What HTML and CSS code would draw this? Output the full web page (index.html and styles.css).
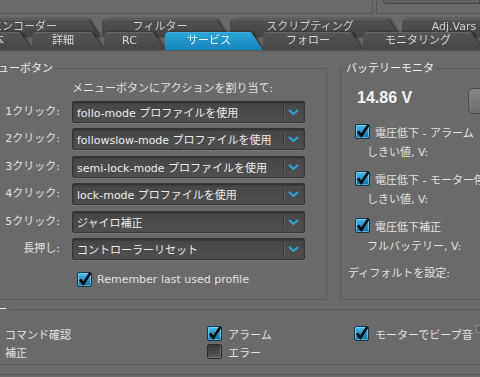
FILE: index.html
```html
<!DOCTYPE html>
<html lang="ja">
<head>
    <meta charset="UTF-8">
    <title>サービス</title>
    <link rel="stylesheet" href="styles.css">
</head>
<body>
    <svg class="sprite" width="0" height="0">
        <defs>
            <linearGradient id="chk-blue" x1="0" y1="0" x2="0" y2="1">
                <stop offset="0" stop-color="#4fc0ee"/>
                <stop offset="1" stop-color="#0b6aa0"/>
            </linearGradient>
            <linearGradient id="chk-dark" x1="0" y1="0" x2="0" y2="1">
                <stop offset="0" stop-color="#353535"/>
                <stop offset="1" stop-color="#5c5c5c"/>
            </linearGradient>
            <symbol id="chk-on" viewBox="0 0 15 15">
                <rect x="0.5" y="0.5" width="14" height="14" rx="1.5" fill="url(#chk-blue)" stroke="#17384c"/>
                <rect x="1.5" y="1.5" width="12" height="12" rx="1" fill="none" stroke="#9be2ff" stroke-opacity="0.55"/>
                <path d="M3 7.4 L6.3 11.8 L13.4 1" fill="none" stroke="#080808" stroke-width="2.6"/>
            </symbol>
            <symbol id="chk-off" viewBox="0 0 15 15">
                <rect x="0.5" y="0.5" width="14" height="14" rx="1.5" fill="url(#chk-dark)" stroke="#2b2b2b"/>
                <path d="M1.5 13.5 H13.5 V1.5" fill="none" stroke="#8a8a8a" stroke-opacity="0.6"/>
            </symbol>
            <symbol id="chev" viewBox="0 0 11 6">
                <path d="M1 1 L5.5 5 L10 1" fill="none" stroke="#2aa6de" stroke-width="2"/>
            </symbol>
        </defs>
    </svg>

    <div class="top-panels">
        <div class="panel panel-left"></div>
        <div class="panel panel-right"><div class="field"></div></div>
    </div>

    <nav class="tabs">
        <div class="tab-row back">
            <span class="tab t-enc">エンコーダー</span>
            <span class="tab t-filter">フィルター</span>
            <span class="tab t-script">スクリプティング</span>
            <span class="tab t-adj">Adj.Vars</span>
        </div>
        <div class="tab-row front">
            <span class="tab t-basic">基本</span>
            <span class="tab t-adv">詳細</span>
            <span class="tab t-rc">RC</span>
            <span class="tab t-svc active">サービス</span>
            <span class="tab t-follow">フォロー</span>
            <span class="tab t-mon">モニタリング</span>
        </div>
    </nav>

    <main class="page">
        <div class="groups">
            <fieldset class="group group-menu">
                <legend>メニューボタン</legend>
                <div class="menu-grid">
                    <div class="hint">メニューボタンにアクションを割り当て:</div>

                    <span class="row-label">1クリック:</span>
                    <div class="select"><span>follo-mode プロファイルを使用</span><i class="sep"></i><svg class="chev"><use href="#chev"/></svg></div>

                    <span class="row-label">2クリック:</span>
                    <div class="select"><span>followslow-mode プロファイルを使用</span><i class="sep"></i><svg class="chev"><use href="#chev"/></svg></div>

                    <span class="row-label">3クリック:</span>
                    <div class="select"><span>semi-lock-mode プロファイルを使用</span><i class="sep"></i><svg class="chev"><use href="#chev"/></svg></div>

                    <span class="row-label">4クリック:</span>
                    <div class="select"><span>lock-mode プロファイルを使用</span><i class="sep"></i><svg class="chev"><use href="#chev"/></svg></div>

                    <span class="row-label">5クリック:</span>
                    <div class="select"><span>ジャイロ補正</span><i class="sep"></i><svg class="chev"><use href="#chev"/></svg></div>

                    <span class="row-label">長押し:</span>
                    <div class="select"><span>コントローラーリセット</span><i class="sep"></i><svg class="chev"><use href="#chev"/></svg></div>

                    <label class="check remember"><svg class="box"><use href="#chk-on"/></svg>Remember last used profile</label>
                </div>
            </fieldset>

            <fieldset class="group group-battery">
                <legend>バッテリーモニタ</legend>
                <div class="battery">
                    <div class="volt-row">
                        <span class="volt">14.86 V</span>
                        <button class="btn-cal"></button>
                    </div>
                    <div class="batt-block">
                        <label class="check batt-check"><svg class="box"><use href="#chk-on"/></svg>電圧低下 - アラーム</label>
                        <div class="sub">しきい値, V:</div>
                    </div>
                    <div class="batt-block">
                        <label class="check batt-check"><svg class="box"><use href="#chk-on"/></svg>電圧低下 - モーター停止</label>
                        <div class="sub">しきい値, V:</div>
                    </div>
                    <div class="batt-block">
                        <label class="check batt-check"><svg class="box"><use href="#chk-on"/></svg>電圧低下補正</label>
                        <div class="sub">フルバッテリー, V:</div>
                    </div>
                    <div class="defaults">ディフォルトを設定:</div>
                </div>
            </fieldset>
        </div>

        <fieldset class="group group-beep">
            <legend>ブザー</legend>
            <div class="beep-grid">
                <span>コマンド確認</span>
                <label class="check"><svg class="box"><use href="#chk-on"/></svg>アラーム</label>
                <label class="check"><svg class="box"><use href="#chk-on"/></svg>モーターでビープ音<i class="corner"></i></label>
                <span>補正</span>
                <label class="check"><svg class="box"><use href="#chk-off"/></svg>エラー</label>
            </div>
        </fieldset>

        <div class="rule"></div>
    </main>
</body>
</html>
```

FILE: styles.css
```css
* {
    box-sizing: border-box;
    margin: 0;
    padding: 0;
}
html, body {
    height: 100%;
}
body {
    width: 480px;
    height: 377px;
    overflow: hidden;
    background: #6a6a6a;
    font-family: "DejaVu Sans", "Noto Sans CJK JP", sans-serif;
    font-size: 11px;
    color: #e2e2e2;
}
.sprite {
    display: block;
    width: 0;
    height: 0;
    overflow: hidden;
}

/* top panels (cut off) */
.top-panels {
    display: flex;
    gap: 3px;
    height: 14px;
}
.panel {
    border-bottom: 1px solid #565656;
}
.panel-left {
    width: 373px;
    border-right: 1px solid #565656;
}
.panel-right {
    flex: 1;
    border-left: 1px solid #565656;
    padding-left: 6px;
}
.field {
    height: 4px;
    border: 1px solid #464646;
    border-top: none;
    border-radius: 0 0 0 5px;
    background: #626262;
}

/* tabs */
.tabs {
    margin-top: 5px;
    height: 31px;
}
.tab-row {
    display: flex;
    filter: drop-shadow(2px 0 1px rgba(0, 0, 0, 0.5));
}
.tab-row.back {
    gap: 2px;
}
.tab-row.front {
    margin-top: -5px;
}
.tab {
    flex: none;
    height: 18px;
    padding-right: 10px;
    text-align: center;
    white-space: nowrap;
    line-height: 16px;
    color: #cfcfcf;
    background: linear-gradient(#515151, #444444);
    box-shadow: inset 0 1px 0 rgba(255, 255, 255, 0.1);
    clip-path: polygon(0 100%, 0 3px, 1px 1px, 3px 0, calc(100% - 13px) 0, calc(100% - 11px) 1px, calc(100% - 10px) 3px, 100% 100%);
}
.front .tab {
    line-height: 18px;
    color: #d8d8d8;
    background: linear-gradient(#565656, #464646);
}
.front .tab.active {
    background: linear-gradient(#2ea7da, #1583b9);
    color: #f2f6f8;
}
.t-enc { margin-left: -42px; width: 142px; }
.t-filter { width: 126px; }
.t-script { width: 170px; }
.t-adj { width: 114px; }
.t-basic { margin-left: -36px; width: 68px; }
.t-adv { width: 72px; }
.t-rc { width: 61px; }
.t-svc { width: 98px; }
.t-follow { width: 100px; }
.t-mon { width: 120px; }

/* group boxes */
.groups {
    display: flex;
    gap: 13px;
    margin: 12px 0 0 -34px;
}
.group {
    border: 1px solid #5a5a5a;
    min-width: 0;
}
.group legend {
    margin-left: 7px;
    padding: 0 2px;
    line-height: 13px;
    color: #f0f0f0;
}
.group-menu {
    width: 361px;
    flex: none;
}
.group-battery {
    width: 170px;
    flex: none;
}
.group-battery legend {
    margin-left: 3px;
}

/* menu button group */
.menu-grid {
    display: grid;
    grid-template-columns: 93px 233px;
    column-gap: 12px;
    row-gap: 5.4px;
    align-items: center;
    padding: 6.6px 21px 12px 0;
}
.hint {
    grid-column: 2;
    line-height: 14px;
}
.row-label {
    text-align: right;
    line-height: 14px;
}
.select {
    display: flex;
    align-items: center;
    height: 22px;
    padding-left: 4px;
    border: 1px solid #363636;
    border-radius: 2px;
    background: linear-gradient(#464646, #4f4f4f);
    box-shadow: inset 0 1px 2px rgba(0, 0, 0, 0.4), 0 1px 0 #767676;
    color: #ececec;
    white-space: nowrap;
}
.select span {
    flex: 1;
}
.select .sep {
    align-self: stretch;
    width: 1px;
    margin: 3px 0;
    background: #3a3a3a;
    box-shadow: 1px 0 0 #5c5c5c;
}
.chev {
    flex: none;
    width: 11px;
    height: 6px;
    margin: 0 5px 0 4px;
}
.check {
    display: flex;
    align-items: center;
    gap: 5px;
    white-space: nowrap;
}
.check .box {
    flex: none;
    width: 15px;
    height: 15px;
}
.remember {
    grid-column: 2;
    height: 15px;
    margin-top: 6.6px;
    padding-left: 5px;
}

/* battery group */
.battery {
    padding: 13px 0 0 7px;
}
.volt-row {
    display: flex;
    align-items: flex-start;
    height: 26px;
    padding-left: 9px;
}
.volt {
    width: 111px;
    font: bold 16px/20px "Liberation Sans", sans-serif;
    color: #f4f4f4;
}
.btn-cal {
    width: 40px;
    height: 26px;
    border: 1px solid #4a4a4a;
    border-radius: 5px;
    background: linear-gradient(#868686, #6e6e6e);
}
.batt-block {
    margin-top: 5px;
}
.volt-row + .batt-block {
    margin-top: 7px;
}
.batt-check {
    height: 21px;
    padding-left: 7px;
}
.sub {
    height: 21px;
    line-height: 21px;
    padding-left: 19px;
}
.defaults {
    margin-top: 5.5px;
    line-height: 21px;
}

/* beep group */
.group-beep {
    width: 540px;
    margin: 3px 0 0 -37px;
}
.group-beep legend {
    margin-left: 8px;
}
.beep-grid {
    display: grid;
    grid-template-columns: 202px 147px auto;
    grid-auto-rows: 18px;
    align-items: center;
    padding: 9px 0 3px 41px;
}
.beep-grid .check {
    gap: 6px;
    height: 18px;
}
.corner {
    align-self: flex-start;
    width: 10px;
    height: 8px;
    margin-left: -3px;
    border: 1px solid #8a8a8a;
    background: #5e5e5e;
}
.rule {
    margin-top: 9px;
    border-top: 1px solid #575757;
}
```
